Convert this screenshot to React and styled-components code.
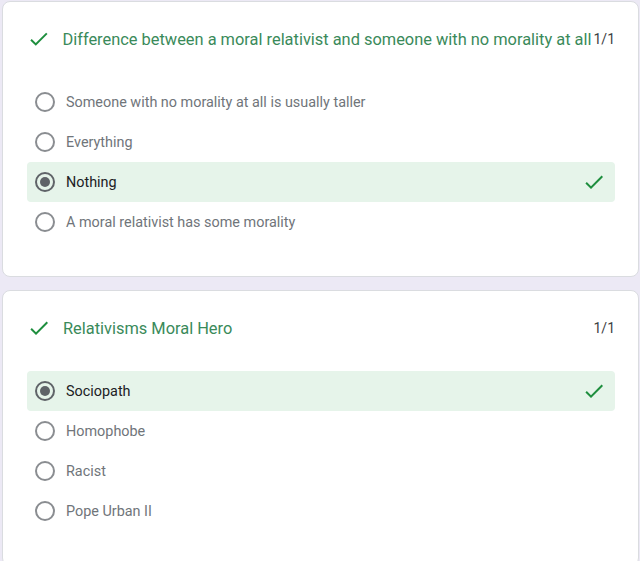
import React from "react";
import styled, { createGlobalStyle } from "styled-components";

const GlobalStyle = createGlobalStyle`
  html, body {
    margin: 0;
    padding: 0;
    background-color: #ece9f5;
    font-family: Roboto, "Liberation Sans", sans-serif;
  }
`;

const Page = styled.div`
  display: flex;
  flex-direction: column;
  gap: 13px;
  padding: 1px 1px 0 2px;
  height: 561px;
  overflow: hidden;
  box-sizing: border-box;
`;

const Card = styled.section`
  background-color: #fff;
  border: 1px solid #dadce0;
  border-radius: 8px;
  padding: 20px 23px 34px 24px;
  flex-shrink: 0;
`;

const Header = styled.div`
  display: flex;
  align-items: center;
  min-height: 34px;
  margin-bottom: 26px;
`;

const Title = styled.h2`
  flex: 1;
  margin: 0 0 0 12px;
  font-size: 16.4px;
  font-weight: 400;
  color: #3a8a5a;
  white-space: nowrap;
`;

const Points = styled.span`
  font-size: 14px;
  color: #3c4043;
  margin-left: 2px;
`;

const Options = styled.div`
  display: flex;
  flex-direction: column;
`;

const Option = styled.div`
  display: flex;
  align-items: center;
  height: 40px;
  padding: 0 9px 0 8px;
  border-radius: 4px;
  background-color: ${(props) => (props.$correct ? "#e6f4ea" : "transparent")};
`;

const Radio = styled.span`
  width: 20px;
  height: 20px;
  box-sizing: border-box;
  border-radius: 50%;
  border: 2px solid ${(props) => (props.$checked ? "#5f6368" : "#8a8d91")};
  display: flex;
  align-items: center;
  justify-content: center;
  flex-shrink: 0;

  &::after {
    content: "";
    display: ${(props) => (props.$checked ? "block" : "none")};
    width: 10px;
    height: 10px;
    border-radius: 50%;
    background-color: #5f6368;
  }
`;

const Label = styled.span`
  flex: 1;
  margin-left: 11px;
  font-size: 14.4px;
  color: ${(props) => (props.$checked ? "#202124" : "#70757a")};
`;

const CheckIcon = ({ size = 24 }) => (
  <svg width={size} height={size} viewBox="0 0 24 24" fill="#1e8e3e">
    <path d="M9 16.17L4.83 12l-1.42 1.41L9 19 21 7l-1.41-1.41z" />
  </svg>
);

const questions = [
  {
    title: "Difference between a moral relativist and someone with no morality at all",
    options: [
      "Someone with no morality at all is usually taller",
      "Everything",
      "Nothing",
      "A moral relativist has some morality",
    ],
    answer: 2,
  },
  {
    title: "Relativisms Moral Hero",
    options: ["Sociopath", "Homophobe", "Racist", "Pope Urban II"],
    answer: 0,
  },
];

const Question = ({ title, options, answer }) => (
  <Card>
    <Header>
      <CheckIcon />
      <Title>{title}</Title>
      <Points>1/1</Points>
    </Header>
    <Options>
      {options.map((opt, i) => (
        <Option key={opt} $correct={i === answer}>
          <Radio $checked={i === answer} />
          <Label $checked={i === answer}>{opt}</Label>
          {i === answer && <CheckIcon />}
        </Option>
      ))}
    </Options>
  </Card>
);

const App = () => (
  <>
    <GlobalStyle />
    <Page>
      {questions.map((q) => (
        <Question key={q.title} {...q} />
      ))}
    </Page>
  </>
);

export default App;
